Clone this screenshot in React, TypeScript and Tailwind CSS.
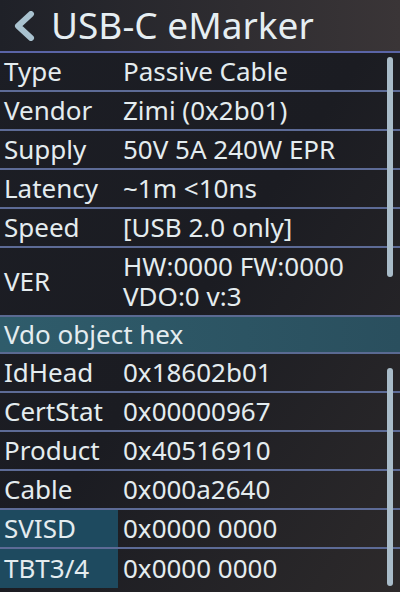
import React from 'react';

type Row = { label: string; value: string[]; hl?: boolean };

const topRows: Row[] = [
  { label: 'Type', value: ['Passive Cable'] },
  { label: 'Vendor', value: ['Zimi (0x2b01)'] },
  { label: 'Supply', value: ['50V 5A 240W EPR'] },
  { label: 'Latency', value: ['~1m <10ns'] },
  { label: 'Speed', value: ['[USB 2.0 only]'] },
  { label: 'VER', value: ['HW:0000 FW:0000', 'VDO:0 v:3'] },
];

const hexRows: Row[] = [
  { label: 'IdHead', value: ['0x18602b01'] },
  { label: 'CertStat', value: ['0x00000967'] },
  { label: 'Product', value: ['0x40516910'] },
  { label: 'Cable', value: ['0x000a2640'] },
  { label: 'SVISD', value: ['0x0000 0000'], hl: true },
  { label: 'TBT3/4', value: ['0x0000 0000'], hl: true },
];

const InfoRow: React.FC<{ row: Row; last?: boolean }> = ({ row, last }) => {
  const tall = row.value.length > 1;
  return (
    <div
      className={`flex items-stretch ${tall ? 'h-[67px]' : 'h-[39px]'} ${last ? '' : 'border-b-2 border-[#5d6b96]'}`}
    >
      <div
        className={`w-[118px] shrink-0 flex items-center pl-[4px] ${row.hl ? 'bg-[#1e4a5f]' : ''}`}
      >
        {row.label}
      </div>
      <div className={`flex flex-col justify-center pl-[5px] ${tall ? 'gap-[1px] leading-[29px]' : ''}`}>
        {row.value.map((v, i) => (
          <span key={i}>{v}</span>
        ))}
      </div>
    </div>
  );
};

const ScrollBar: React.FC<{ top: string; height: string }> = ({ top, height }) => (
  <div className={`absolute right-[7px] w-[6px] rounded-full bg-[#a9bcc9] ${top} ${height}`} />
);

export default function App() {
  return (
    <div
      className="w-[400px] h-[592px] overflow-hidden bg-linear-to-br from-[#1c1e25] via-[#1b1c22] to-[#2d2a2b] text-[#e4ecef] text-[26px]"
      style={{ fontFamily: '"Noto Sans", "Open Sans", sans-serif' }}
    >
      {/* title bar */}
      <div className="h-[53px] flex items-center border-b-2 border-[#5a64a6] bg-linear-to-r from-[#1f2128] to-[#3a3537]">
        <svg width="22" height="30" viewBox="0 0 22 30" className="ml-[13px] mr-[16px]">
          <path d="M18 3 L5 15 L18 27" fill="none" stroke="#a9c2cf" strokeWidth="6" strokeLinejoin="round" strokeLinecap="round" />
        </svg>
        <span className="text-[37px] leading-none -mt-[2px] text-[#e6eef2]">USB-C eMarker</span>
      </div>

      <div className="relative">
        {topRows.map((r, i) => (
          <InfoRow key={r.label} row={r} last={i === topRows.length - 1} />
        ))}
        <ScrollBar top="top-[4px]" height="h-[220px]" />
      </div>

      <div className="h-[39px] flex items-center pl-[4px] border-y-2 border-[#5a6a92] bg-linear-to-r from-[#2f5c6b] to-[#2a4f5e]">
        Vdo object hex
      </div>

      <div className="relative">
        {hexRows.map((r, i) => (
          <InfoRow key={r.label} row={r} last={i === hexRows.length - 1} />
        ))}
        <ScrollBar top="top-[14px]" height="h-[218px]" />
      </div>
    </div>
  );
}
